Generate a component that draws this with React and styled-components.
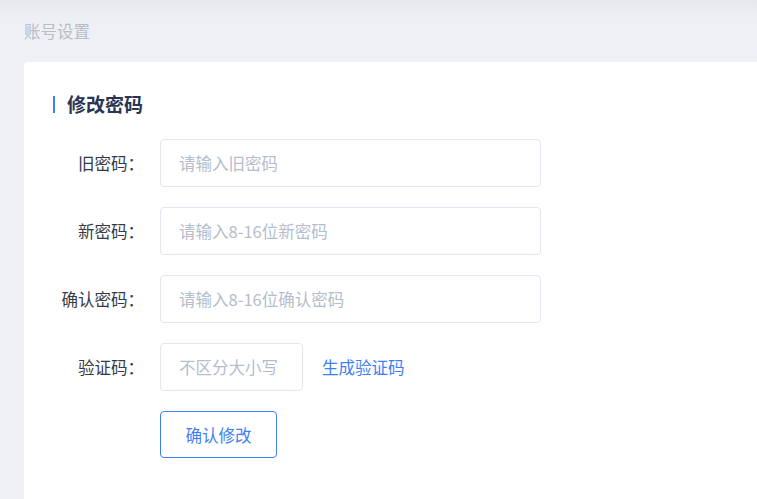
import React, { useState } from "react";
import styled, { createGlobalStyle } from "styled-components";

const GlobalStyle = createGlobalStyle`
  html, body {
    margin: 0;
    padding: 0;
    background: #eef0f5;
    font-family: "Noto Sans CJK SC", "Noto Sans", "Liberation Sans", sans-serif;
  }
  * { box-sizing: border-box; }
`;

const Page = styled.div`
  min-height: 499px;
  background: linear-gradient(to bottom, #e5e7eb 0px, #eef0f5 18px);
  padding: 19px 0 0 24px;
  overflow: hidden;
`;

const Crumb = styled.div`
  font-size: 16.5px;
  line-height: 24px;
  color: #b7bdc9;
  margin-bottom: 19px;
`;

const Card = styled.div`
  background: #fff;
  border-radius: 4px 0 0 0;
  min-height: 440px;
  padding: 30px 0 0 29px;
`;

const Title = styled.h2`
  margin: 0 0 23px;
  display: flex;
  align-items: center;
  gap: 12px;
  font-size: 19px;
  line-height: 24px;
  font-weight: 700;
  color: #2b3553;
  &::before {
    content: "";
    width: 2px;
    height: 17px;
    background: #3d7ff6;
  }
`;

const Form = styled.div`
  display: flex;
  flex-direction: column;
  gap: 20px;
`;

const Row = styled.div`
  display: flex;
  align-items: center;
`;

const Label = styled.label`
  width: 91px;
  text-align: right;
  font-size: 16.5px;
  color: #353a48;
  margin-right: 16px;
  white-space: nowrap;
`;

const Input = styled.input`
  width: ${({ $w }) => $w}px;
  height: 48px;
  border: 1px solid #e2e6ef;
  border-radius: 4px;
  padding: 0 18px;
  font-size: 16.5px;
  font-family: inherit;
  color: #353a48;
  outline: none;
  &::placeholder {
    color: #b5bdcc;
  }
  &:focus {
    border-color: #3d7ff6;
  }
`;

const LinkText = styled.a`
  margin-left: 19px;
  font-size: 16.5px;
  color: #3d7ff6;
  cursor: pointer;
  text-decoration: none;
`;

const Button = styled.button`
  margin-left: 107px;
  width: 117px;
  height: 47px;
  border: 1px solid #3d7ff6;
  border-radius: 4px;
  background: #fff;
  color: #3d7ff6;
  font-size: 16.5px;
  font-family: inherit;
  cursor: pointer;
`;

const fields = [
  { label: "旧密码", placeholder: "请输入旧密码" },
  { label: "新密码", placeholder: "请输入8-16位新密码" },
  { label: "确认密码", placeholder: "请输入8-16位确认密码" },
];

export default function App() {
  const [values, setValues] = useState({});
  return (
    <>
      <GlobalStyle />
      <Page>
        <Crumb>账号设置</Crumb>
        <Card>
          <Title>修改密码</Title>
          <Form>
            {fields.map((f) => (
              <Row key={f.label}>
                <Label>{f.label}：</Label>
                <Input
                  $w={381}
                  type="password"
                  placeholder={f.placeholder}
                  value={values[f.label] || ""}
                  onChange={(e) => setValues({ ...values, [f.label]: e.target.value })}
                />
              </Row>
            ))}
            <Row>
              <Label>验证码：</Label>
              <Input $w={143} placeholder="不区分大小写" />
              <LinkText>生成验证码</LinkText>
            </Row>
            <Row>
              <Button>确认修改</Button>
            </Row>
          </Form>
        </Card>
      </Page>
    </>
  );
}
